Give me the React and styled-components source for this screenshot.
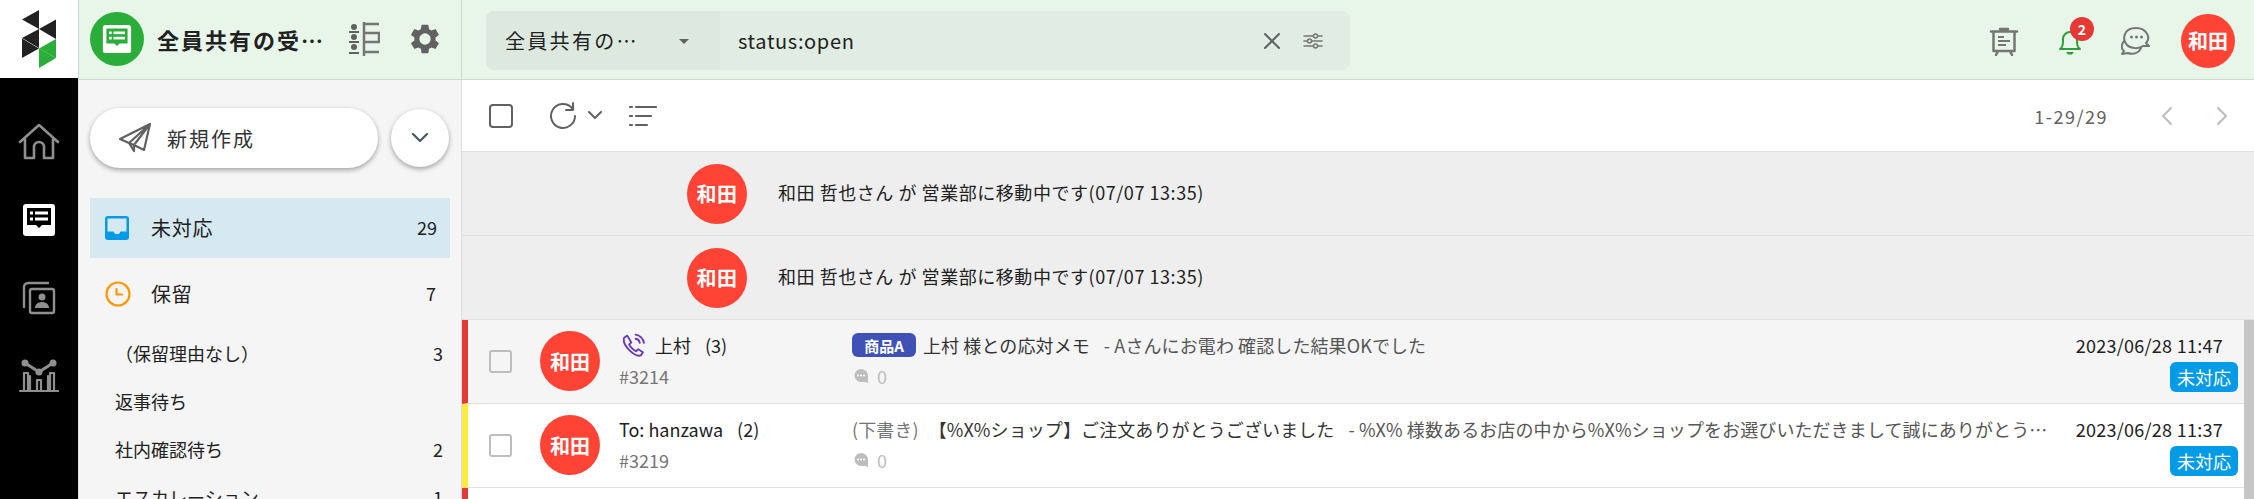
import React from "react";
import styled, { createGlobalStyle } from "styled-components";

const Global = createGlobalStyle`
  html, body { margin: 0; padding: 0; height: 100%; overflow: hidden; background: #fff; }
  body { font-family: "Noto Sans CJK JP", "Noto Sans", sans-serif; color: #212121; }
  * { box-sizing: border-box; }
  #root { height: 100%; }
`;

const Page = styled.div`display: flex; width: 2254px; height: 499px; overflow: hidden;`;
const Rail = styled.nav`width: 78px; flex: none; display: flex; flex-direction: column; background: #000;`;
const LogoCell = styled.div`height: 78px; background: #fff; display: flex; align-items: flex-start; justify-content: center; padding-top: 10px;`;
const RailItems = styled.div`display: flex; flex-direction: column; align-items: center; padding-top: 25px;`;
const RailItem = styled.div`height: 78px; display: flex; align-items: center; justify-content: center; width: 100%;`;

const Main = styled.div`flex: 1; min-width: 0; display: flex; flex-direction: column;`;
const TopBar = styled.header`height: 80px; flex: none; display: flex; background: #e8f5e9; border-bottom: 1px solid #cddbce; border-left: 1px solid #cddbce;`;
const Brand = styled.div`width: 383px; flex: none; display: flex; align-items: center; padding: 0 19px 1px 11px; border-right: 1px solid #cddbce;`;
const BrandBadge = styled.div`width: 54px; height: 54px; border-radius: 50%; background: #2bad3a; display: flex; align-items: center; justify-content: center; flex: none;`;
const BrandTitle = styled.div`font-size: 22px; font-weight: 700; letter-spacing: 2px; margin-left: 13px; width: 180px; white-space: nowrap; overflow: hidden; text-overflow: ellipsis; line-height: 30px;`;
const BrandIcons = styled.div`display: flex; align-items: center; gap: 28px; margin-left: 15px;`;

const SearchArea = styled.div`flex: 1; min-width: 0; display: flex; align-items: center; padding: 2px 19px 0 24px;`;
const SearchBox = styled.div`width: 864px; height: 59px; display: flex; border-radius: 8px; overflow: hidden; background: #e1ede2;`;
const ScopeSelect = styled.div`width: 234px; flex: none; background: #dde9df; display: flex; align-items: center; padding-left: 19px; position: relative; font-size: 20px; letter-spacing: 2.3px; color: #212121;`;
const Caret = styled.span`position: absolute; left: 193px; top: 28px; width: 0; height: 0; border-left: 5px solid transparent; border-right: 5px solid transparent; border-top: 5px solid #616161;`;
const Query = styled.div`flex: 1; display: flex; align-items: center; padding: 0 27px 0 18px; font-size: 20px; letter-spacing: .65px;`;
const QueryText = styled.span`flex: 1;`;
const QueryIcons = styled.div`display: flex; align-items: center; gap: 22px;`;
const TopActions = styled.div`margin-left: auto; display: flex; align-items: center;`;
const ActionSlot = styled.div`width: 66px; display: flex; justify-content: center; position: relative;`;
const CountBadge = styled.span`position: absolute; top: -10px; left: 33px; width: 24px; height: 24px; border-radius: 50%; background: #e53935; color: #fff; font-size: 14px; font-weight: 700; display: flex; align-items: center; justify-content: center;`;
const Avatar = styled.div`width: ${p => p.$size}px; height: ${p => p.$size}px; border-radius: 50%; background: #ff4436; color: #fff; font-weight: 700; font-size: 20px; display: flex; align-items: center; justify-content: center; flex: none; white-space: nowrap; margin-left: ${p => p.$ml || 0}px;`;

const Body = styled.div`flex: 1; min-height: 0; display: flex;`;
const Sidebar = styled.aside`width: 384px; flex: none; background: #f5f5f5; border-left: 1px solid #e3e3e3; border-right: 1px solid #dedede; padding: 28px 11px 0 11px; overflow: hidden;`;
const ComposeRow = styled.div`display: flex; align-items: center; gap: 13px;`;
const ComposeButton = styled.div`width: 288px; height: 60px; border-radius: 30px; background: #fff; box-shadow: 0 2px 5px rgba(0,0,0,.35); display: flex; align-items: center; padding-left: 29px; gap: 16px; font-size: 20px; letter-spacing: 2px; color: #333;`;
const RoundButton = styled.div`width: 58px; height: 58px; border-radius: 50%; background: #fff; box-shadow: 0 2px 5px rgba(0,0,0,.35); display: flex; align-items: center; justify-content: center;`;
const NavList = styled.div`margin-top: 30px; display: flex; flex-direction: column;`;
const NavItem = styled.div`height: ${p => p.$h}px; display: flex; align-items: center; padding-left: 15px; padding-right: ${p => p.$pr}px; background: ${p => (p.$active ? "#d6e8f0" : "transparent")}; font-size: 20px; letter-spacing: .7px;`;
const NavIcon = styled.span`width: 46px; display: flex; flex: none;`;
const NavLabel = styled.span`flex: 1; padding-bottom: 2px;`;
const NavCount = styled.span`font-size: 18px; letter-spacing: 0; padding-bottom: 2px;`;
const SubItem = styled.div`height: 48px; display: flex; align-items: center; padding-left: 25px; padding-right: 7px; font-size: 18px; flex: none;`;

const Content = styled.main`flex: 1; min-width: 0; display: flex; flex-direction: column; position: relative;`;
const Toolbar = styled.div`height: 72px; flex: none; display: flex; align-items: center; padding: 0 0 0 27px; border-bottom: 1px solid #e0e0e0;`;
const ToolIcons = styled.div`display: flex; align-items: center;`;
const ToolSlot = styled.span`display: flex; margin-left: ${p => p.$ml}px;`;
const Pager = styled.div`margin-left: auto; display: flex; align-items: center; font-size: 18px; color: #616161; letter-spacing: 1.5px;`;
const PagerArrows = styled.div`display: flex; gap: 43px; margin-left: 53px; margin-right: 26px;`;

const SystemRow = styled.div`height: 84px; flex: none; background: #eee; border-bottom: 1px solid #e0e0e0; display: flex; align-items: center; padding-left: 225px; gap: 31px; font-size: 18px; letter-spacing: .55px;`;
const SystemText = styled.span`padding-bottom: 3px;`;
const ListRow = styled.div`height: 84px; flex: none; display: grid; grid-template-columns: 25px 105px 233px 1fr 184px; align-items: stretch; background: ${p => p.$bg}; border-bottom: 1px solid #e0e0e0; border-left: 6px solid ${p => p.$mark}; padding-left: 21px; padding-right: 16px;`;
const CheckCell = styled.div`display: flex; align-items: center; padding-bottom: 1px;`;
const AvatarCell = styled.div`display: flex; align-items: center; padding: 0 0 1px 26px;`;
const Check = styled.div`width: 23px; height: 23px; border: 2px solid #bdbdbd; border-radius: 3px;`;
const Stack = styled.div`display: flex; flex-direction: column; padding-top: 10px; min-width: 0;`;
const Line = styled.div`height: 30px; display: flex; align-items: center; font-size: 18px; white-space: nowrap;`;
const Ticket = styled.div`height: 32px; display: flex; align-items: center; font-size: 18px; color: #757575;`;
const PhoneSlot = styled.span`display: flex; margin: 0 9px 0 2px;`;
const Muted = styled.span`margin-left: 14px;`;
const Tag = styled.span`background: #3f51b5; color: #fff; font-weight: 700; font-size: 15px; height: 24px; width: 64px; justify-content: center; border-radius: 6px; display: inline-flex; align-items: center; margin-right: 7px; flex: none;`;
const Subject = styled.div`height: 30px; line-height: 30px; font-size: 18px; letter-spacing: .1px; white-space: nowrap; overflow: hidden; text-overflow: ellipsis; color: #555;`;
const Draft = styled.span`color: #757575; margin-right: 10px;`;
const Strong = styled.span`color: #333;`;
const Preview = styled.span`color: #555; margin-left: 14px;`;
const Comments = styled.div`height: 32px; display: flex; align-items: center; gap: 9px; color: #bdbdbd; font-size: 18px; padding-left: 2px;`;
const SubjectRow = styled.div`display: flex; align-items: center; height: 30px; min-width: 0;`;
const When = styled.div`display: flex; flex-direction: column; align-items: flex-end; padding-top: 10px;`;
const Stamp = styled.div`height: 30px; line-height: 30px; font-size: 18px; padding-right: 15px; letter-spacing: .27px;`;
const Status = styled.div`width: 68px; height: 30px; background: #039be5; color: #fff; border-radius: 6px; font-size: 18px; display: flex; align-items: center; justify-content: center; margin-top: 2px;`;
const Scrollbar = styled.div`position: absolute; right: 0; top: 240px; bottom: 0; width: 10px; background: #c6c6c6;`;

const Logo = () => (
  <svg width="34" height="58" viewBox="22 10 34 58">
    <g fill="#212121">
      <polygon points="39,10 22,19.5 39,29" />
      <polygon points="39,29 56,19.5 56,39" />
      <polygon points="22,38 39,29 39,48" />
      <polygon points="22,38.5 39,48.5 22,58" />
    </g>
    <g fill="#2bad3a">
      <polygon points="39,48.5 56,39 56,58" />
      <polygon points="39,48.5 56,58 39,68" />
    </g>
  </svg>
);

const InboxGlyph = ({ size = 34, frame, fill, line }) => (
  <svg width={size} height={size} viewBox="0 0 34 34">
    <rect x="1" y="1" width="32" height="32" rx="3" fill={frame} />
    <path d="M5 5h24v17H20l-3 3-3-3H5z" fill={fill} />
    <g fill={line}>
      <rect x="8" y="8.5" width="3" height="3" /><rect x="13" y="8.5" width="13" height="3" />
      <rect x="8" y="14.5" width="3" height="3" /><rect x="13" y="14.5" width="13" height="3" />
    </g>
  </svg>
);

const Ico = ({ w, h = w, vb, sw = 2, c = "#616161", children }) => (
  <svg width={w} height={h} viewBox={vb || `0 0 ${w} ${h}`} fill="none" stroke={c} strokeWidth={sw} strokeLinecap="round" strokeLinejoin="round">{children}</svg>
);

const Gear = () => (
  <svg width="34" height="34" viewBox="0 0 24 24" fill="#616161">
    <path fillRule="evenodd" d="M19.4 13c.04-.33.06-.66.06-1s-.02-.67-.07-1l2.11-1.65a.5.5 0 0 0 .12-.64l-2-3.46a.5.5 0 0 0-.61-.22l-2.49 1a7.3 7.3 0 0 0-1.69-.98l-.38-2.65A.49.49 0 0 0 13.96 2h-4a.49.49 0 0 0-.49.42l-.38 2.65c-.61.25-1.17.59-1.69.98l-2.49-1a.49.49 0 0 0-.61.22l-2 3.46a.49.49 0 0 0 .12.64L4.53 11c-.04.33-.07.67-.07 1s.03.67.07 1l-2.11 1.65a.5.5 0 0 0-.12.64l2 3.46c.12.22.39.3.61.22l2.49-1c.52.39 1.08.73 1.69.98l.38 2.65c.05.24.25.42.49.42h4c.24 0 .45-.18.49-.42l.38-2.65c.61-.25 1.17-.59 1.69-.98l2.49 1c.23.08.49 0 .61-.22l2-3.46a.5.5 0 0 0-.12-.64zM12 16a4 4 0 1 1 0-8 4 4 0 0 1 0 8z" />
  </svg>
);

const Phone = () => (
  <Ico w={25} h={26} vb="0 0 24 24" c="#673ab7" sw={1.8}>
    <path d="M6 3 3 5c-1 3 1 8 5 12s8 6 11 5l2-3-4.500-3-2 2c-2-.6-6-4.600-6.600-6.500l2-2z" />
    <path d="M14 6c2 .3 3.700 2 4 4M14 2c4 .3 7.600 4 8 8" />
  </Ico>
);

const Bubble = () => (
  <svg width="14" height="15" viewBox="0 0 14 15"><path d="M7 0a7 6.800 0 0 1 7 7v7l-3-1H7A6.500 6.500 0 0 1 7 0z" fill="#bdbdbd" /><g fill="#fff"><circle cx="4" cy="6.500" r="1" /><circle cx="7" cy="6.500" r="1" /><circle cx="10" cy="6.500" r="1" /></g></svg>
);

const Row = ({ mark, bg, who, phone, count, id, subject, time }) => (
  <ListRow $mark={mark} $bg={bg}>
    <CheckCell><Check /></CheckCell>
    <AvatarCell><Avatar $size={60}>和田</Avatar></AvatarCell>
    <Stack>
      <Line>{phone && <PhoneSlot><Phone /></PhoneSlot>}{who}<Muted>({count})</Muted></Line>
      <Ticket>#{id}</Ticket>
    </Stack>
    <Stack>
      {subject}
      <Comments><Bubble />0</Comments>
    </Stack>
    <When>
      <Stamp>{time}</Stamp>
      <Status>未対応</Status>
    </When>
  </ListRow>
);

export default function App() {
  return (
    <Page>
      <Global />
      <Rail>
        <LogoCell><Logo /></LogoCell>
        <RailItems>
          <RailItem>
            <Ico w={42} h={38} vb="0 0 42 38" c="#8f8f8f" sw={2.6}><path d="M2 19 21 2l19 17M7 16v19h9V24a5 5 0 0 1 10 0v11h9V16" /></Ico>
          </RailItem>
          <RailItem><InboxGlyph frame="#fff" fill="#000" line="#fff" /></RailItem>
          <RailItem>
            <Ico w={34} h={34} c="#8f8f8f" sw={2.4}>
              <path d="M26 2H6a4 4 0 0 0-4 4v20" />
              <rect x="8" y="8" width="24" height="24" rx="2" />
              <circle cx="20" cy="16" r="3.500" fill="#8f8f8f" stroke="none" />
              <path d="M13 27c0-8 14-8 14 0z" fill="#8f8f8f" stroke="none" />
            </Ico>
          </RailItem>
          <RailItem>
            <Ico w={40} h={34} c="#8f8f8f" sw={2.2}>
              <path d="M6 4l14 9 14-9" strokeWidth="3" />
              <circle cx="6" cy="4" r="3.500" fill="#8f8f8f" stroke="none" /><circle cx="20" cy="13" r="3.500" fill="#8f8f8f" stroke="none" /><circle cx="34" cy="4" r="3.500" fill="#8f8f8f" stroke="none" />
              <path d="M1 32h38M5 31V14h4v17M18 31V21h4v10M31 31V14h4v17M11 31V17M29 31V17" />
            </Ico>
          </RailItem>
        </RailItems>
      </Rail>
      <Main>
        <TopBar>
          <Brand>
            <BrandBadge><InboxGlyph size={30} frame="#fff" fill="#2bad3a" line="#fff" /></BrandBadge>
            <BrandTitle>全員共有の受信箱</BrandTitle>
            <BrandIcons>
              <svg width="32" height="34" viewBox="0 0 32 34" fill="none">
                <g fill="#616161"><circle cx="6" cy="5" r="3" /><rect x="1" y="9" width="10" height="2" /><circle cx="6" cy="15" r="3" /><rect x="1" y="19" width="10" height="2" /><circle cx="6" cy="25" r="3" /><rect x="1" y="30" width="10" height="2" /></g>
                <path d="M16 0v34M16 2h15M16 11h15v9H16M16 30h15" stroke="#757575" strokeWidth="2.500" />
              </svg>
              <Gear />
            </BrandIcons>
          </Brand>
          <SearchArea>
            <SearchBox>
              <ScopeSelect>全員共有の…<Caret /></ScopeSelect>
              <Query>
                <QueryText>status:open</QueryText>
                <QueryIcons>
                  <Ico w={18} c="#616161" sw={2}><path d="M2 2l14 14M16 2 2 16" /></Ico>
                  <Ico w={20} h={18} c="#757575" sw={1.500}>
                    <path d="M1 4h9M15 4h4M1 9h3M9 9h10M1 14h9M15 14h4" /><circle cx="12.500" cy="4" r="2" /><circle cx="6.500" cy="9" r="2" /><circle cx="12.500" cy="14" r="2" />
                  </Ico>
                </QueryIcons>
              </Query>
            </SearchBox>
            <TopActions>
              <ActionSlot>
                <Ico w={30} h={30} c="#757575" sw={2.500}>
                  <path d="M2 5.500h26M11 3h8M4.500 6v19h21V6M9 25l-2 4M21 25l2 4" />
                  <path d="M9 11h6M9 15h12M9 19h8" strokeWidth="2" strokeLinecap="butt" />
                </Ico>
              </ActionSlot>
              <ActionSlot>
                <Ico w={24} h={28} c="#2e9e3a" sw={2}>
                  <path d="M2 22c3-2 3-5 3-10a7 7 0 0 1 14 0c0 5 0 8 3 10z" />
                  <path d="M8 25h8l-2 2.500h-4z" fill="#2e9e3a" stroke="none" />
                </Ico>
                <CountBadge>2</CountBadge>
              </ActionSlot>
              <ActionSlot>
                <Ico w={30} h={30} c="#757575" sw={2}>
                  <path d="M6 19C1 14 2 2 15 2c11 0 15 10 10 15l3 3h-6c-4 3-12 3-16-1z" />
                  <path d="M3 15c-3 4-3 8 0 10l-2 3 6-1c5 2 11 0 13-5" />
                  <g fill="#757575" stroke="none"><circle cx="10.500" cy="11" r="1.500" /><circle cx="15.500" cy="11" r="1.500" /><circle cx="20.500" cy="11" r="1.500" /></g>
                </Ico>
              </ActionSlot>
              <Avatar $size={54} $ml={12}>和田</Avatar>
            </TopActions>
          </SearchArea>
        </TopBar>
        <Body>
          <Sidebar>
            <ComposeRow>
              <ComposeButton>
                <Ico w={32} h={30} c="#616161" sw={2.200}><path d="M31 1 1 16l9 4zM31 1l-6 26-10-5-5-2 5 8v-6zM31 1 15 22" /></Ico>
                新規作成
              </ComposeButton>
              <RoundButton><Ico w={18} h={10} c="#455a64" sw={2.200}><path d="M2 1l7 7 7-7" /></Ico></RoundButton>
            </ComposeRow>
            <NavList>
              <NavItem $h={60} $active $pr={13}>
                <NavIcon>
                  <svg width="24" height="24" viewBox="0 0 24 24"><rect x="0" y="0" width="24" height="24" rx="3" fill="#039be5" /><path d="M2.500 2.500h19v13h-6l-1.500 2.500h-4l-1.500-2.500h-6z" fill="#d6e8f0" /></svg>
                </NavIcon>
                <NavLabel>未対応</NavLabel>
                <NavCount>29</NavCount>
              </NavItem>
              <NavItem $h={72} $pr={14}>
                <NavIcon>
                  <Ico w={26} h={26} c="#ff9800" sw={2.200}><circle cx="13" cy="13" r="11.500" /><path d="M11.500 8v5.500h5.500" /></Ico>
                </NavIcon>
                <NavLabel>保留</NavLabel>
                <NavCount>7</NavCount>
              </NavItem>
              <SubItem><NavLabel>（保留理由なし）</NavLabel><NavCount>3</NavCount></SubItem>
              <SubItem><NavLabel>返事待ち</NavLabel></SubItem>
              <SubItem><NavLabel>社内確認待ち</NavLabel><NavCount>2</NavCount></SubItem>
              <SubItem><NavLabel>エスカレーション</NavLabel><NavCount>1</NavCount></SubItem>
            </NavList>
          </Sidebar>
          <Content>
            <Toolbar>
              <ToolIcons>
                <Ico w={24} h={24} c="#616161" sw={2}><rect x="1" y="1" width="22" height="22" rx="3" /></Ico>
                <ToolSlot $ml={36}>
                  <Ico w={28} h={28} c="#616161" sw={2}><path d="M23 6a12 12 0 1 0 3 8" /><path d="M24 1v7h-7" /></Ico>
                </ToolSlot>
                <ToolSlot $ml={10}><Ico w={16} h={10} c="#616161" sw={2}><path d="M2 1l6 6 6-6" /></Ico></ToolSlot>
                <ToolSlot $ml={26}>
                  <Ico w={28} h={24} c="#616161" sw={2.200}><path d="M7 3h20M7 12h15M7 21h11M1 3h2M1 12h2M1 21h2" /></Ico>
                </ToolSlot>
              </ToolIcons>
              <Pager>
                1-29/29
                <PagerArrows>
                  <Ico w={12} h={18} c="#b8bcc4" sw={2}><path d="M10 1 2 9l8 8" /></Ico>
                  <Ico w={12} h={18} c="#b8bcc4" sw={2}><path d="m2 1 8 8-8 8" /></Ico>
                </PagerArrows>
              </Pager>
            </Toolbar>
            <SystemRow><Avatar $size={60}>和田</Avatar><SystemText>和田 哲也さん が 営業部に移動中です(07/07 13:35)</SystemText></SystemRow>
            <SystemRow><Avatar $size={60}>和田</Avatar><SystemText>和田 哲也さん が 営業部に移動中です(07/07 13:35)</SystemText></SystemRow>
            <Row mark="#e53935" bg="#f5f5f5" who="上村" phone count="3" id="3214" time="2023/06/28 11:47"
              subject={<SubjectRow><Tag>商品A</Tag><Subject><Strong>上村 様との応対メモ</Strong><Preview>- Aさんにお電わ 確認した結果OKでした</Preview></Subject></SubjectRow>} />
            <Row mark="#ffeb3b" bg="#fff" who="To: hanzawa" count="2" id="3219" time="2023/06/28 11:37"
              subject={<Subject><Draft>(下書き)</Draft><Strong>【%X%ショップ】ご注文ありがとうございました</Strong><Preview>- %X% 様数あるお店の中から%X%ショップをお選びいただきまして誠にありがとうございます</Preview></Subject>} />
            <ListRow $mark="#e53935" $bg="#fff" />
            <Scrollbar />
          </Content>
        </Body>
      </Main>
    </Page>
  );
}
